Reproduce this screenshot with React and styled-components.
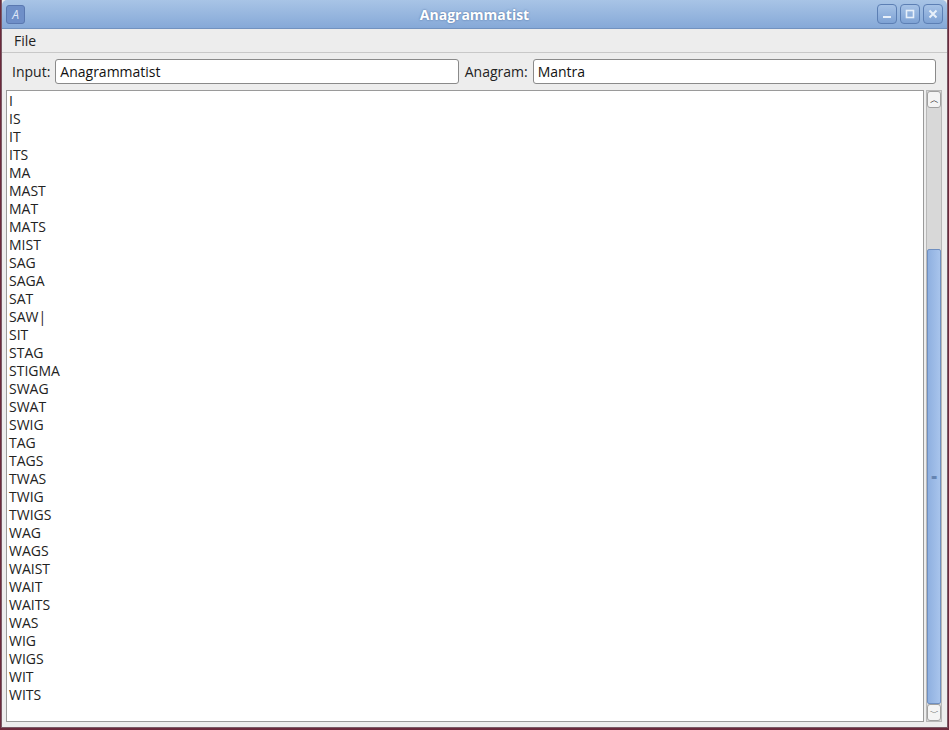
import React from "react";
import styled, { createGlobalStyle } from "styled-components";

const G = createGlobalStyle`
  html,body{margin:0;padding:0;background:#6b2a3c;}
  body{font-family:"Open Sans","DejaVu Sans",sans-serif;}
`;
const Win = styled.div`
  width:947px;height:728px;margin:0 1px;display:flex;flex-direction:column;
  background:#ededed;border:1px solid #7a5a66;border-top:none;box-sizing:border-box;
`;
const Title = styled.div`
  height:28px;flex:none;display:flex;align-items:center;position:relative;
  background:linear-gradient(#a8c4e6,#86a9d8);border-bottom:1px solid #7292bf;
  border-radius:5px 5px 0 0;padding:0 4px;
`;
const TitleText = styled.div`
  position:absolute;left:0;right:0;text-align:center;color:#fff;font-weight:bold;font-size:14px;
  text-shadow:0 0 2px #4a6a9a;
`;
const AppIcon = styled.div`
  width:17px;height:17px;border-radius:3px;background:#6f8fc8;color:#dfe8f8;font-size:12px;font-style:italic;
  display:flex;align-items:center;justify-content:center;border:1px solid #5a78b0;
`;
const Btns = styled.div`margin-left:auto;display:flex;gap:3px;z-index:1;`;
const WBtn = styled.div`
  width:18px;height:18px;border-radius:4px;border:1px solid #5c7fb4;background:linear-gradient(#a6c2e6,#7ea2d4);
  display:flex;align-items:center;justify-content:center;
`;
const Menu = styled.div`
  height:23px;flex:none;display:flex;align-items:center;padding:0 12px;font-size:14px;color:#222;
  border-bottom:1px solid #c8c8c8;
`;
const Row = styled.div`
  display:flex;align-items:center;gap:5px;padding:6px 11px 4px 10px;font-size:14px;color:#222;
`;
const Field = styled.div`
  flex:1;height:25px;box-sizing:border-box;border:1px solid #8a8a8a;border-radius:3px;background:#fff;
  display:flex;align-items:center;padding:0 4px;font-size:14px;color:#111;
`;
const Label = styled.span`margin-left:${p=>p.gap||0}px;`;
const Body = styled.div`flex:1;display:flex;padding:2px 5px 5px 4px;gap:2px;min-height:0;`;
const List = styled.div`
  flex:1;background:#fff;border:1px solid #9a9a9a;padding:1px 2px;font-size:14px;color:#222;line-height:18px;overflow:hidden;
`;
const Scroll = styled.div`width:16px;display:flex;flex-direction:column;background:#d8d8d8;border:1px solid #b8b8b8;box-sizing:border-box;`;
const Arrow = styled.div`height:15px;background:#f4f4f4;border:1px solid #a0a0a0;border-radius:3px;display:flex;align-items:center;justify-content:center;font-size:9px;`;
const Track = styled.div`flex:1;display:flex;flex-direction:column;padding-top:141px;`;
const Thumb = styled.div`flex:1;background:linear-gradient(90deg,#8fb0e0,#a8c4ec);border:1px solid #6f8fc0;border-radius:2px;display:flex;align-items:center;justify-content:center;color:#3a5a8a;font-size:8px;`;

const words="I IS IT ITS MA MAST MAT MATS MIST SAG SAGA SAT SAW SIT STAG STIGMA SWAG SWAT SWIG TAG TAGS TWAS TWIG TWIGS WAG WAGS WAIST WAIT WAITS WAS WIG WIGS WIT WITS".split(" ");

export default function App(){
  return (<><G/><Win>
    <Title><AppIcon>A</AppIcon><TitleText>Anagrammatist</TitleText>
      <Btns>
        <WBtn><svg width="10" height="10"><rect x="1" y="7" width="8" height="2" fill="#e8f0fa"/></svg></WBtn>
        <WBtn><svg width="10" height="10"><rect x="1.5" y="1.5" width="7" height="7" fill="none" stroke="#e8f0fa" strokeWidth="1.6"/></svg></WBtn>
        <WBtn><svg width="10" height="10"><path d="M1.5 1.5L8.5 8.5M8.5 1.5L1.5 8.5" stroke="#e8f0fa" strokeWidth="2"/></svg></WBtn>
      </Btns>
    </Title>
    <Menu>File</Menu>
    <Row><span>Input:</span><Field>Anagrammatist</Field><Label gap={1}>Anagram:</Label><Field>Mantra</Field></Row>
    <Body>
      <List>{words.map((w,i)=><div key={i}>{w}{w==="SAW"&&i===12?"|":""}</div>)}</List>
      <Scroll><Arrow>︿</Arrow><Track><Thumb>≡</Thumb></Track><Arrow>﹀</Arrow></Scroll>
    </Body>
  </Win></>);
}
